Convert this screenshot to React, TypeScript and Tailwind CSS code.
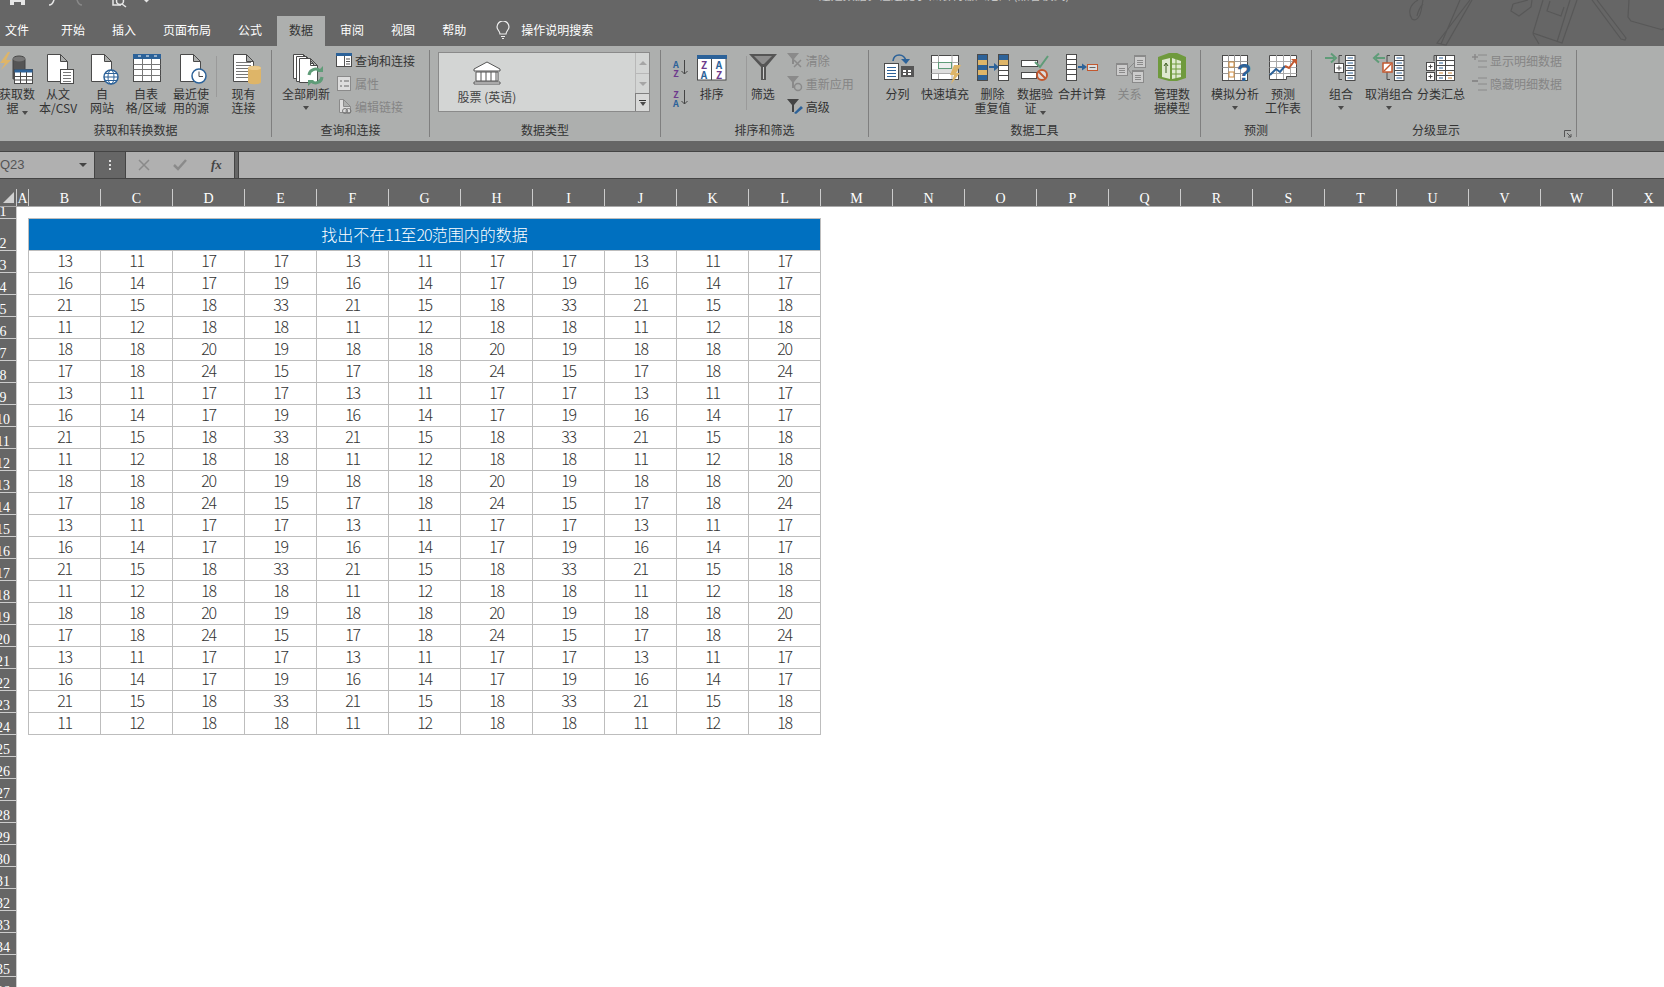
import type { ReactNode } from 'react'

const BLUE = '#2c6299'
const GOLD = '#deb568'
const GREEN = '#5f9c78'
const RED = '#c2582f'
const LINE = '#4a4a4a'

const doc = (x: number, y: number, w: number, h: number) =>
  `M${x} ${y}h${w - 7}l7 7v${h - 7}h${-w}zM${x + w - 7} ${y}v7h7`

function Svg({ children }: { children: ReactNode }) {
  return (
    <svg width="36" height="32" viewBox="0 0 36 32" fill="none" className="overflow-visible">
      {children}
    </svg>
  )
}

function Mini({ children }: { children: ReactNode }) {
  return (
    <svg width="17" height="17" viewBox="0 0 17 17" fill="none" className="shrink-0">
      {children}
    </svg>
  )
}

function Caret() {
  return <span className="inline-block h-0 w-0 border-x-[3.5px] border-t-[4px] border-x-transparent border-t-[#4a4a4a]" />
}

function Lines({ x, y, w, n, gap = 3, color = '#666' }: { x: number; y: number; w: number; n: number; gap?: number; color?: string }) {
  return (
    <>
      {Array.from({ length: n }, (_, i) => (
        <path key={i} d={`M${x} ${y + i * gap + 0.5}h${w}`} stroke={color} />
      ))}
    </>
  )
}

function ListCol({ x, y = 3, w = 9.5, dash = BLUE }: { x: number; y?: number; w?: number; dash?: string }) {
  return (
    <>
      <rect x={x + 0.5} y={y + 0.5} width={w} height={25} fill="#fff" stroke={LINE} />
      {[0, 1, 2, 3, 4].map((i) => (
        <g key={i}>
          <path d={`M${x + 0.5} ${y + 5.5 + i * 5}h${w}`} stroke={LINE} />
          <path d={`M${x + 2.5} ${y + 3 + i * 5}h${w - 4}`} stroke={dash} />
        </g>
      ))}
    </>
  )
}

const icons: Record<string, ReactNode> = {
  getData: (
    <Svg>
      <path d="M9 0 1 11h5l-4 7 10-10H7l4-8z" fill={GOLD} />
      <path d="M14 7c0-4 12-4 12 0v20H14z" fill="#555" stroke="#444" />
      <ellipse cx="20" cy="7" rx="6" ry="2.5" fill="#777" />
      <rect x="15.5" y="17.5" width="18" height="14" fill="#fff" stroke={LINE} />
      <rect x="15.5" y="17.5" width="18" height="3" fill={BLUE} />
      <path d="M15.5 24.5h18M15.5 28h18M21.5 20v11M27.5 20v11" stroke={LINE} />
    </Svg>
  ),
  fromText: (
    <Svg>
      <path d={doc(7.5, 2.5, 20, 27)} fill="#fff" stroke={LINE} />
      <rect x="20.5" y="17.5" width="13" height="14" fill="#fff" stroke={LINE} />
      <Lines x={23} y={20} w={8} n={4} color="#777" />
    </Svg>
  ),
  fromWeb: (
    <Svg>
      <path d={doc(7.5, 2.5, 20, 27)} fill="#fff" stroke={LINE} />
      <circle cx="27" cy="25" r="7" fill="#fff" stroke={BLUE} strokeWidth="1.5" />
      <ellipse cx="27" cy="25" rx="3" ry="7" stroke={BLUE} />
      <path d="M20 25h14M21 21.5h12M21 28.5h12" stroke={BLUE} />
    </Svg>
  ),
  fromTable: (
    <Svg>
      <rect x="5.5" y="2.5" width="27" height="27" fill="#fff" stroke={LINE} />
      <rect x="5" y="2" width="28" height="5" fill={BLUE} />
      <path d="M10 4h3M18 4h3M26 4h3" stroke="#fff" />
      <path d="M5.5 12.5h27M5.5 17.5h27M5.5 23.5h27M14.5 7v22M23.5 7v22" stroke="#777" />
    </Svg>
  ),
  recent: (
    <Svg>
      <path d={doc(7.5, 2.5, 20, 27)} fill="#fff" stroke={LINE} />
      <circle cx="26" cy="24" r="7" fill="#fff" stroke={BLUE} strokeWidth="1.5" />
      <path d="M26 19.5V24.5H30" stroke={LINE} />
    </Svg>
  ),
  existing: (
    <Svg>
      <path d={doc(7.5, 2.5, 20, 27)} fill="#fff" stroke={LINE} />
      <Lines x={10} y={10} w={15} n={6} color="#777" />
      <path d="M22 16c0-3 13-3 13 0v14c0 3-13 3-13 0z" fill={GOLD} />
      <ellipse cx="28.5" cy="16" rx="6.5" ry="2" fill="#eccb8c" />
    </Svg>
  ),
  refresh: (
    <Svg>
      <path d={doc(5.5, 2.5, 17, 24)} fill="#fff" stroke={LINE} />
      <path d={doc(8.5, 4.5, 17, 25)} fill="#fff" stroke={LINE} />
      <path d={doc(11.5, 6.5, 18, 24)} fill="#fff" stroke={LINE} />
      <path d="M21 23a6.5 6.5 0 0 1 11-4" stroke={GREEN} strokeWidth="3" />
      <path d="M34 25a6.5 6.5 0 0 1-11 4" stroke={GREEN} strokeWidth="3" />
      <path d="M29 20h6v-6zM26 28h-6v6z" fill={GREEN} />
    </Svg>
  ),
  sortBig: (
    <svg width="30" height="26" viewBox="0 0 30 26">
      <rect x="0.5" y="0.5" width="28.5" height="24.5" fill="#fff" stroke={LINE} />
      <rect x="0" y="0" width="30" height="4" fill={BLUE} />
      <path d="M14.5 4v21" stroke={LINE} />
      <text x="7" y="14" textAnchor="middle" fontSize="10" fontWeight="700" fill="#6d3a8c">Z</text>
      <text x="7" y="24" textAnchor="middle" fontSize="10" fontWeight="700" fill={BLUE}>A</text>
      <text x="22" y="14" textAnchor="middle" fontSize="10" fontWeight="700" fill={BLUE}>A</text>
      <text x="22" y="24" textAnchor="middle" fontSize="10" fontWeight="700" fill="#6d3a8c">Z</text>
    </svg>
  ),
  filter: (
    <Svg>
      <path d="M4 2h28L21 15v13h-5V15z" fill="#555" />
      <path d="M9 4h18l-8 8h-2z" fill="#8d8d8d" />
      <path d="M18 15h1v12h-1z" fill="#cfcfcf" />
    </Svg>
  ),
  split: (
    <Svg>
      <rect x="4.5" y="11.5" width="14" height="16" fill="#fff" stroke={LINE} />
      <path d="M7 15.5h9M7 18.5h9M7 21.5h9M7 24.5h9" stroke={BLUE} />
      <rect x="21" y="14" width="13" height="11" fill="#555" />
      <path d="M23 18h3v2h-3zM28 18h3v2h-3zM23 21h3v2h-3zM28 21h3v2h-3z" fill="#fff" />
      <path d="M13 9C14 1 24 1 26 9" stroke={BLUE} strokeWidth="1.6" />
      <path d="M21 7h9l-4 5z" fill={BLUE} />
    </Svg>
  ),
  flash: (
    <Svg>
      <rect x="4.5" y="3.5" width="27" height="24" fill="#fff" stroke={LINE} />
      <path d="M4.5 10.5h27M4.5 21.5h27M11.5 3v24M25 3v24" stroke="#aaa" />
      <rect x="11.5" y="10.5" width="13" height="6" fill="#eee" stroke={GREEN} />
      <rect x="5" y="17" width="26" height="4" fill="#ddd" />
      <path d="M27 13h7l-5 8h4l-9 11 3-9h-4z" fill={GOLD} />
    </Svg>
  ),
  dedupe: (
    <Svg>
      <rect x="2.5" y="2.5" width="10" height="26" fill={BLUE} stroke={LINE} />
      <rect x="3" y="8" width="9" height="5" fill={GOLD} />
      <rect x="3" y="18" width="9" height="5" fill={GOLD} />
      <path d="M14 15h6" stroke={BLUE} strokeWidth="2" />
      <path d="M19 11l5 4-5 4z" fill={BLUE} />
      <rect x="23.5" y="2.5" width="10" height="26" fill="#fff" stroke={LINE} />
      <rect x="24" y="3" width="9" height="5" fill={BLUE} />
      <rect x="24" y="8" width="9" height="5" fill={GOLD} />
      <path d="M23.5 13.5h10M23.5 18.5h10M23.5 23.5h10" stroke={LINE} />
    </Svg>
  ),
  validate: (
    <Svg>
      <rect x="4.5" y="8.5" width="16" height="6" fill="#fff" stroke={LINE} />
      <rect x="4.5" y="20.5" width="15" height="6" fill="#fff" stroke={LINE} />
      <path d="M18 10l5 5L31 4" stroke={GREEN} strokeWidth="2" />
      <circle cx="25" cy="23" r="5" fill="#ddd" stroke={RED} strokeWidth="2" />
      <path d="M21.5 19.5l7 7" stroke={RED} strokeWidth="2" />
    </Svg>
  ),
  consolidate: (
    <Svg>
      <rect x="2.5" y="2.5" width="10" height="26" fill="#fff" stroke={LINE} />
      <path d="M2.5 7.5h10M2.5 12.5h10M2.5 17.5h10M2.5 22.5h10" stroke={LINE} />
      <path d="M14 15h5" stroke={BLUE} strokeWidth="2" />
      <path d="M18 11.5l5 3.5-5 3.5z" fill={BLUE} />
      <rect x="23.5" y="12.5" width="10" height="6" fill="#ddd" stroke={RED} />
      <path d="M25.5 15.5h6" stroke="#666" />
    </Svg>
  ),
  relation: (
    <Svg>
      <path d="M16 17l6-6M16 17l6 8" stroke="#8a8a8a" />
      <g fill="#ccc" stroke="#8a8a8a">
        <rect x="4.5" y="11.5" width="11" height="12" />
        <rect x="22.5" y="3.5" width="11" height="12" />
        <rect x="20.5" y="18.5" width="11" height="12" />
      </g>
      <path d="M4 11h12v2H4zM22 3h12v2H22zM20 18h12v2H20z" fill="#8a8a8a" />
      <Lines x={7} y={16} w={6} n={3} gap={2} color="#8a8a8a" />
      <Lines x={25} y={8} w={6} n={3} gap={2} color="#8a8a8a" />
      <Lines x={23} y={23} w={6} n={3} gap={2} color="#8a8a8a" />
    </Svg>
  ),
  model: (
    <Svg>
      <path d="M4 5 15 1h8l9 4v21l-9 3h-8L4 26z" fill="#6f9a3d" />
      <path d="M8 8l8-2v21l-8-2zM18 6l9 3v16l-9 2z" fill="#dfe9d0" />
      <path d="M18 12l9 0M18 17l9 0M18 22l9 0M22 6v21" stroke="#6f9a3d" />
      <path d="M12 21v-9M10 14l2-3 2 3" stroke="#3d5f20" />
    </Svg>
  ),
  whatIf: (
    <Svg>
      <rect x="5.5" y="3.5" width="25" height="25" fill="#fff" stroke={LINE} />
      <path d="M5.5 9.5h25M5.5 15.5h25M5.5 21.5h25M11.5 3v25M17.5 3v25M23.5 3v25" stroke="#999" />
      <rect x="12" y="10" width="5" height="5" fill="#fff" stroke="#d08a3a" />
      <rect x="12" y="20" width="5" height="5" fill="#fff" stroke="#d08a3a" />
      <text x="27" y="29" textAnchor="middle" fontSize="24" fontWeight="700" fontFamily="Liberation Sans" fill={BLUE}>?</text>
    </Svg>
  ),
  forecast: (
    <Svg>
      <path d="M4.5 3.5h27v21h-10v3H4.5z" fill="#fff" stroke={LINE} />
      <path d="M4.5 9.5h27M4.5 15.5h27M4.5 21.5h27M11.5 3v24M18.5 3v24M25.5 3v21" stroke="#aaa" />
      <path d="M5 23l6-6 4 3 5-6" stroke={BLUE} strokeWidth="2" />
      <path d="M20 14l4 2 6-8" stroke={RED} strokeWidth="2" />
      <path d="M26 7h6v6z" fill={RED} />
    </Svg>
  ),
  group: (
    <Svg>
      <path d="M2 6h9" stroke={GREEN} strokeWidth="2" />
      <path d="M8 1.5l5 4.5-5 4.5" stroke={GREEN} strokeWidth="2" />
      <path d="M19 3.5h-3v24h3" stroke={LINE} />
      <rect x="11.5" y="11.5" width="9" height="9" fill="#fff" stroke={LINE} />
      <path d="M13.5 16h5M16 13.5v5" stroke={LINE} />
      <ListCol x={22} />
    </Svg>
  ),
  ungroup: (
    <Svg>
      <path d="M5 6h9" stroke={GREEN} strokeWidth="2" />
      <path d="M8 1.5L3 6l5 4.5" stroke={GREEN} strokeWidth="2" />
      <path d="M19 3.5h-3v24h3" stroke={LINE} />
      <rect x="12" y="11" width="9" height="9" fill="#fff" stroke={RED} strokeWidth="1.5" />
      <path d="M13 19l7-7" stroke={RED} strokeWidth="1.5" />
      <ListCol x={23} />
    </Svg>
  ),
  subtotal: (
    <Svg>
      <path d="M11 9V3.5h3M11 22v-1M11 12v-1" stroke={LINE} />
      <rect x="3.5" y="10.5" width="8" height="8" fill="#fff" stroke={LINE} />
      <rect x="3.5" y="20.5" width="8" height="8" fill="#fff" stroke={LINE} />
      <path d="M5.5 14.5h4M7.5 12.5v4M5.5 24.5h4M7.5 22.5v4" stroke={LINE} />
      <rect x="13.5" y="3.5" width="18" height="25" fill="#fff" stroke={LINE} />
      <path d="M13.5 8.5h18M13.5 13.5h18M13.5 18.5h18M13.5 23.5h18M22.5 3v25" stroke={LINE} />
      <path d="M16 6h4M16 11h4M16 16h4M16 26h4" stroke={BLUE} />
      <path d="M16 21h4M25 21h4M25 26h4" stroke="#d08a3a" />
    </Svg>
  ),
}

const mini: Record<string, ReactNode> = {
  query: (
    <Mini>
      <rect x="0.5" y="1.5" width="15" height="13" fill="#fff" stroke={LINE} />
      <rect x="0" y="1" width="16" height="3" fill={BLUE} />
      <path d="M8.5 4v10M10 7h4M10 9.5h4M10 12h4" stroke="#555" />
    </Mini>
  ),
  props: (
    <Mini>
      <rect x="1.5" y="1.5" width="13" height="14" fill="#ddd" stroke="#8a8a8a" />
      <path d="M4 6h2M4 11h2M8 6h5M8 11h5" stroke="#666" />
    </Mini>
  ),
  links: (
    <Mini>
      <path d={doc(3.5, 1.5, 11, 13)} fill="#ddd" stroke="#8a8a8a" />
      <circle cx="9" cy="13" r="2.5" stroke="#777" />
      <circle cx="12.5" cy="13" r="2.5" stroke="#777" />
    </Mini>
  ),
  clear: (
    <Mini>
      <path d="M0 1h12L7 7v5H5V7z" fill="#8a8a8a" />
      <path d="M7 8l7 7M14 8l-7 7" stroke="#8a8a8a" strokeWidth="1.5" />
    </Mini>
  ),
  reapply: (
    <Mini>
      <path d="M0 1h12L7 7v6H5V7z" fill="#8a8a8a" />
      <circle cx="11" cy="12" r="3.5" stroke="#8a8a8a" strokeWidth="1.5" />
    </Mini>
  ),
  advanced: (
    <Mini>
      <path d="M0 1h12L7 7v7H5V7z" fill="#444" />
      <path d="M7 15l7-7 2 2-7 6z" fill={BLUE} />
    </Mini>
  ),
  show: (
    <Mini>
      <path d="M7 3h9M7 9h9M7 15h9" stroke="#8a8a8a" />
      <path d="M1 5h6M4 2v6" stroke="#8a8a8a" strokeWidth="1.5" />
    </Mini>
  ),
  hide: (
    <Mini>
      <path d="M7 3h9M7 9h9M7 15h9" stroke="#8a8a8a" />
      <path d="M1 6h6" stroke="#8a8a8a" strokeWidth="2" />
    </Mini>
  ),
}

function Big({ w, icon, lines, caret, muted, shift = 0 }: { w: number; icon: string; lines: string[]; caret?: boolean; muted?: boolean; shift?: number }) {
  const one = lines.length === 1
  return (
    <div className={`flex shrink-0 flex-col items-center ${muted ? 'text-[#858585]' : ''}`} style={{ width: w, marginLeft: shift }}>
      <div className="mt-[2px] flex h-[32px] w-[36px] justify-center">{icons[icon]}</div>
      <div className="mt-[3px] flex flex-col items-center whitespace-nowrap text-center leading-[14px]">
        {lines.map((l, i) => (
          <span key={i}>
            {l}
            {caret && !one && i === lines.length - 1 ? <span className="ml-[3px] inline-block align-middle"><Caret /></span> : null}
          </span>
        ))}
        {caret && one ? <span className="flex h-[14px] items-center"><Caret /></span> : null}
      </div>
    </div>
  )
}

function Small({ icon, label, muted }: { icon: string; label: string; muted?: boolean }) {
  return (
    <div className={`flex h-[23px] items-center gap-[2px] whitespace-nowrap ${muted ? 'text-[#858585]' : ''}`}>
      {mini[icon]}
      {label}
    </div>
  )
}

function Group({ w, label, children, launcher }: { w: number; label: string; children: ReactNode; launcher?: boolean }) {
  return (
    <div className="flex h-[87px] shrink-0 flex-col border-r border-[#7f7f7f]" style={{ width: w }}>
      <div className="flex h-[73px] overflow-visible">{children}</div>
      <div className={`relative text-center leading-[14px] ${launcher ? 'pr-[16px]' : ''}`}>
        {label}
        {launcher ? (
          <svg width="8" height="8" viewBox="0 0 8 8" fill="none" className="absolute right-[4px] top-[7px]">
            <path d="M0.5 7V0.5H7M3 3l4 4M7 4v3H4" stroke="#555" />
          </svg>
        ) : null}
      </div>
    </div>
  )
}

function Ribbon() {
  return (
    <div className="flex h-[95px] bg-[#adafae] pt-[4px] text-[12px] text-[#333]">
      <Group w={272} label="获取和转换数据">
        <Big w={38} shift={-2} icon="getData" lines={['获取数', '据']} caret />
        <Big w={44} icon="fromText" lines={['从文', '本/CSV']} />
        <Big w={44} icon="fromWeb" lines={['自', '网站']} />
        <Big w={44} icon="fromTable" lines={['自表', '格/区域']} />
        <Big w={46} icon="recent" lines={['最近使', '用的源']} />
        <div className="mx-[2px] mt-[6px] h-[41px] w-px bg-[#9a9a9a]" />
        <Big w={49} icon="existing" lines={['现有', '连接']} />
      </Group>
      <Group w={158} label="查询和连接">
        <Big w={62} icon="refresh" lines={['全部刷新']} caret shift={3} />
        <div className="-mt-[1px] ml-[-1px] flex flex-col">
          <Small icon="query" label="查询和连接" />
          <Small icon="props" label="属性" muted />
          <Small icon="links" label="编辑链接" muted />
        </div>
      </Group>
      <Group w={231} label="数据类型">
        <div className="mt-[2px] ml-[8px] flex h-[60px] w-[212px] border border-[#8a8a8a] bg-[#d3d5d4]">
          <div className="flex w-[196px] flex-col items-center pr-[100px]">
            <svg width="28" height="24" viewBox="0 0 28 24" fill="none" className="mt-[8px]">
              <path d="M14 1 1 8v2h26V8z" fill="#fff" stroke="#555" />
              <path d="M3 11h22v9H3zM1 21h26v2H1z" fill="#fff" stroke="#555" />
              <path d="M8 11v9M13 11v9M18 11v9M23 11v9" stroke="#555" />
            </svg>
            <span className="mt-[5px] whitespace-nowrap leading-[14px] text-[#444]">股票 (英语)</span>
          </div>
          <div className="flex w-[14px] flex-col border-l border-[#b8b8b8]">
            <div className="flex h-[21px] items-center justify-center border-b border-[#b8b8b8]">
              <span className="h-0 w-0 border-x-[4px] border-b-[4px] border-x-transparent border-b-[#a5a5a5]" />
            </div>
            <div className="flex h-[19px] items-center justify-center">
              <span className="h-0 w-0 border-x-[4px] border-t-[4px] border-x-transparent border-t-[#a5a5a5]" />
            </div>
            <div className="-ml-px flex flex-1 flex-col items-center justify-center gap-[1px] border border-b-0 border-r-0 border-[#7f7f7f] bg-[#d8d9d8]">
              <span className="h-px w-[7px] bg-[#333]" />
              <Caret />
            </div>
          </div>
        </div>
      </Group>
      <Group w={208} label="排序和筛选">
        <div className="ml-[12px] flex flex-col pt-[10px] text-[9px] font-bold leading-[9px]">
          <div className="flex h-[30px] items-start">
            <span className="flex flex-col items-center"><span className="text-[#2c6299]">A</span><span className="text-[#6d3a8c]">Z</span></span>
            <svg width="7" height="16" viewBox="0 0 7 16" fill="none" className="ml-[2px]"><path d="M3.5 0v14M0.5 11l3 3 3-3" stroke="#444" /></svg>
          </div>
          <div className="flex h-[20px] items-start">
            <span className="flex flex-col items-center"><span className="text-[#6d3a8c]">Z</span><span className="text-[#2c6299]">A</span></span>
            <svg width="7" height="16" viewBox="0 0 7 16" fill="none" className="ml-[2px]"><path d="M3.5 0v14M0.5 11l3 3 3-3" stroke="#444" /></svg>
          </div>
        </div>
        <div className="ml-[8px] flex w-[32px] flex-col items-center">
          <div className="mt-[5px] flex h-[32px] w-[30px]">{icons.sortBig}</div>
          <span className="leading-[14px] whitespace-nowrap">排序</span>
        </div>
        <div className="ml-[18px] mr-[9px] mt-[6px] h-[54px] w-px bg-[#9a9a9a]" />
        <Big w={30} icon="filter" lines={['筛选']} shift={-8} />
        <div className="-mt-[1px] ml-[9px] flex flex-col">
          <Small icon="clear" label="清除" muted />
          <Small icon="reapply" label="重新应用" muted />
          <Small icon="advanced" label="高级" />
        </div>
      </Group>
      <Group w={332} label="数据工具">
        <Big w={47} shift={5} icon="split" lines={['分列']} />
        <Big w={48} icon="flash" lines={['快速填充']} />
        <Big w={47} icon="dedupe" lines={['删除', '重复值']} />
        <Big w={38} icon="validate" lines={['数据验', '证']} caret />
        <Big w={48} shift={4} icon="consolidate" lines={['合并计算']} />
        <Big w={47} icon="relation" lines={['关系']} muted />
        <Big w={38} icon="model" lines={['管理数', '据模型']} />
      </Group>
      <Group w={111} label="预测">
        <Big w={48} shift={10} icon="whatIf" lines={['模拟分析']} caret />
        <Big w={48} icon="forecast" lines={['预测', '工作表']} />
      </Group>
      <Group w={265} label="分级显示" launcher>
        <Big w={48} shift={5} icon="group" lines={['组合']} caret />
        <Big w={48} icon="ungroup" lines={['取消组合']} caret />
        <Big w={54} shift={1} icon="subtotal" lines={['分类汇总']} />
        <div className="-mt-[1px] ml-[3px] flex flex-col">
          <Small icon="show" label="显示明细数据" muted />
          <Small icon="hide" label="隐藏明细数据" muted />
        </div>
      </Group>
    </div>
  )
}

function TitleBar() {
  return (
    <div className="relative h-[46px] bg-[#666666] text-[12px] text-white">
      <div className="flex h-[16px] items-start overflow-hidden">
        <svg width="170" height="8" viewBox="0 0 170 8" fill="none" className="shrink-0">
          <path d="M10 0h15v5H10zM14 2v3h6V2" fill="#e6e6e6" />
          <path d="M14 2h7v3h-7z" fill="#666" />
          <path d="M49 5c3 0 4-2 5-5" stroke="#e6e6e6" strokeWidth="1.5" />
          <path d="M82 5c-3 0-4-2-5-5" stroke="#888" strokeWidth="1.5" />
          <path d="M113 0v5h8" stroke="#e6e6e6" strokeWidth="1.5" />
          <circle cx="120" cy="1" r="3.5" stroke="#e6e6e6" strokeWidth="1.5" />
          <path d="M122 4l4 3" stroke="#e6e6e6" strokeWidth="1.5" />
          <path d="M144 0h5l-2.5 2.5z" fill="#e6e6e6" />
        </svg>
        <span className="-mt-[13px] ml-[632px] whitespace-nowrap leading-[16px] text-[#c8c8c8]">07.这是数据验证之提示和限制输入范围 (兼容模式)  - Excel</span>
      </div>
      <svg width="264" height="46" viewBox="0 0 264 46" fill="none" stroke="#585858" strokeWidth="1.2" className="absolute right-0 top-0">
        <path d="M18 0c-9 5-10 13-6 19 4 3 8-2 9-8l2-11M23 4c-3 3-5 8-6 12" />
        <path d="M70 0 37 43l9 2L72 0M60 0 41 44" />
        <path d="M113 4l-2 7 8 5 12-9 1-7M113 4l15-4" />
        <path d="M143 0l-10 33 29 10 15-43M170 0l-13 42M150 1l-3 10 14 5 3-9" />
        <path d="M133 34l6 10" />
        <path d="M197 0l29 38-1 2-4-1-29-39" />
        <path d="M229 0l-1 17 3 4 32 9M263 30v-2" />
      </svg>
      <div className="absolute bottom-0 left-0 flex h-[30px] items-center">
        <Tab label="文件" first />
        <Tab label="开始" />
        <Tab label="插入" />
        <Tab label="页面布局" />
        <Tab label="公式" />
        <Tab label="数据" active />
        <Tab label="审阅" />
        <Tab label="视图" />
        <Tab label="帮助" />
        <svg width="14" height="18" viewBox="0 0 14 18" fill="none" className="ml-[15px] -mt-[2px]">
          <path d="M4 13c0-3-3-4-3-7a6 6 0 0 1 12 0c0 3-3 4-3 7z" stroke="#eee" strokeWidth="1.2" />
          <path d="M5 15.5h4M6 17.5h2" stroke="#eee" />
        </svg>
        <span className="ml-[11px] -mt-[2px] whitespace-nowrap">操作说明搜索</span>
      </div>
    </div>
  )
}

function Tab({ label, active, first }: { label: string; active?: boolean; first?: boolean }) {
  return (
    <div
      className={`flex h-[30px] items-center whitespace-nowrap pb-[2px] ${first ? 'mr-[8px] pl-[5px] pr-[12px]' : 'mr-[3px] px-[12px]'} ${active ? 'bg-[#adafae] text-[#333]' : ''}`}
    >
      {label}
    </div>
  )
}

function FormulaBar() {
  return (
    <div className="bg-[#666666] pt-[10px]">
      <div className="flex h-[28px] items-stretch gap-0 border-y border-[#444] text-[12px]">
        <div className="flex w-[95px] items-center justify-between border-r border-[#444] bg-[#b0b0b0] pr-[7px] font-['Liberation_Sans',sans-serif] text-[#555] text-[13px]">
          Q23
          <span className="h-0 w-0 border-x-[4px] border-t-[4px] border-x-transparent border-t-[#444]" />
        </div>
        <div className="flex w-[30px] items-center justify-center">
          <span className="flex flex-col gap-[2px]">
            <span className="h-[2px] w-[2px] bg-[#ddd]" />
            <span className="h-[2px] w-[2px] bg-[#ddd]" />
            <span className="h-[2px] w-[2px] bg-[#ddd]" />
          </span>
        </div>
        <div className="flex w-[110px] items-center border-x border-[#444] bg-[#b0b0b0] pl-[12px]">
          <svg width="12" height="12" viewBox="0 0 12 12" stroke="#8a8a8a" strokeWidth="1.5"><path d="M1 1l10 10M11 1 1 11" /></svg>
          <svg width="14" height="12" viewBox="0 0 14 12" fill="none" stroke="#8a8a8a" strokeWidth="2.5" className="ml-[23px]"><path d="M1 6l4 4 8-9" /></svg>
          <span className="ml-[24px] font-['Liberation_Serif',serif] text-[13px] font-bold italic text-[#444]">fx</span>
        </div>
        <div className="ml-[3px] flex-1 border-l border-[#444] bg-[#b0b0b0]" />
      </div>
    </div>
  )
}

const letters = 'BCDEFGHIJKLMNOPQRSTUVWX'.split('')

function ColHeaders() {
  return (
    <div className="flex h-[28px] overflow-hidden border-b border-[#a9a9a9] bg-[#666666] font-['Liberation_Serif',serif] text-[14px] text-white">
      <div className="mt-[10px] -mb-[2px] flex w-[17px] shrink-0 items-start justify-center border-r border-[#ccc] pt-[3px]">
        <span className="h-0 w-0 border-b-[11px] border-l-[11px] border-b-[#d0d0d0] border-l-transparent" />
      </div>
      <ColHead label="A" w={12} />
      {letters.map((l) => (
        <ColHead key={l} label={l} w={72} />
      ))}
    </div>
  )
}

function ColHead({ label, w }: { label: string; w: number }) {
  return (
    <div className="mt-[10px] flex shrink-0 items-center justify-center border-r border-[#ccc] pt-[3px] leading-[14px]" style={{ width: w }}>
      {label}
    </div>
  )
}

function RowHeaders() {
  const rows = Array.from({ length: 36 }, (_, i) => i + 1)
  return (
    <div className="h-[781px] w-[17px] shrink-0 overflow-hidden border-r border-[#ccc] bg-[#666666] font-['Liberation_Serif',serif] text-[14px] text-white">
      {rows.map((r) => (
        <div
          key={r}
          className={`flex items-end justify-center border-b border-[#ccc] pr-[10px] leading-[12px] ${r === 1 ? 'h-[12px]' : r === 2 ? 'h-[32px]' : 'h-[22px]'}`}
        >
          <span className="whitespace-nowrap">{r}</span>
        </div>
      ))}
    </div>
  )
}

const base = [
  [13, 11, 17, 17],
  [16, 14, 17, 19],
  [21, 15, 18, 33],
  [11, 12, 18, 18],
  [18, 18, 20, 19],
  [17, 18, 24, 15],
]

const tableRows = Array.from({ length: 22 }, (_, r) =>
  Array.from({ length: 11 }, (_, c) => base[r % 6][c % 4]),
)

function Sheet() {
  return (
    <div className="flex-1 bg-white pl-[11px] pt-[11px]">
      <div className="w-[793px] border-l border-t border-[#bdbdbd]">
        <div className="flex h-[32px] items-center justify-center border-b border-r border-[#bdbdbd] bg-[#0070c0] pb-[2px] font-['Noto_Sans_CJK_SC',sans-serif] text-[16px] font-light text-white">
          找出不在<span className="tracking-[-1px]">11</span>至<span className="tracking-[-1px]">20</span>范围内的数据
        </div>
        <div className="grid grid-cols-[repeat(11,72px)] font-['Noto_Sans_CJK_SC',sans-serif] text-[16px] font-light tracking-[-1.2px] text-[#333]">
          {tableRows.flatMap((row, r) =>
            row.map((v, c) => (
              <div key={`${r}-${c}`} className="flex h-[22px] items-center justify-center border-b border-r border-[#bdbdbd] pb-[3px]">
                {v}
              </div>
            )),
          )}
        </div>
      </div>
    </div>
  )
}

export default function App() {
  return (
    <div className="h-[987px] w-[1664px] overflow-hidden bg-white font-['Noto_Sans_CJK_SC','Liberation_Sans',sans-serif]">
      <TitleBar />
      <Ribbon />
      <FormulaBar />
      <ColHeaders />
      <div className="flex">
        <RowHeaders />
        <Sheet />
      </div>
    </div>
  )
}
